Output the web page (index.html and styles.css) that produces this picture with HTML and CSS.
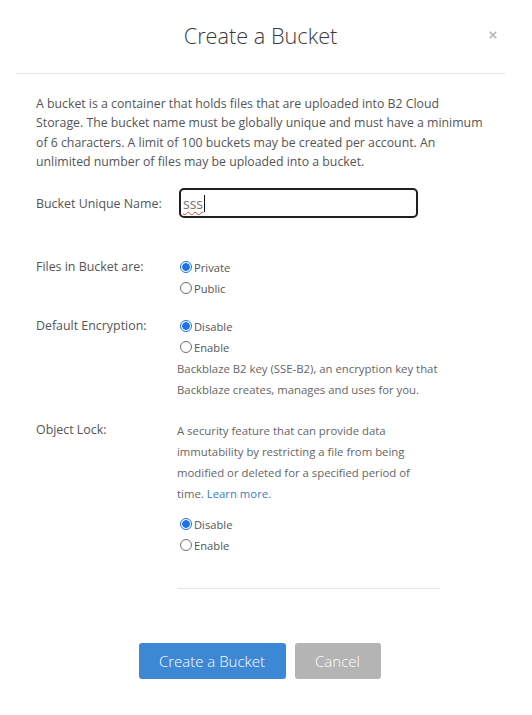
FILE: index.html
```html
<!DOCTYPE html>
<html lang="en">
<head>
<meta charset="utf-8">
<title>Create a Bucket</title>
<link rel="stylesheet" href="styles.css">
</head>
<body>
<div class="modal">
  <header class="modal-header">
    <h1 class="modal-title">Create a Bucket</h1>
    <button class="close" aria-label="Close">
      <svg width="8" height="8" viewBox="0 0 8 8"><path d="M0.8 0.8 L7.2 7.2 M7.2 0.8 L0.8 7.2" stroke="#b8b8b8" stroke-width="1.7" fill="none"/></svg>
    </button>
  </header>
  <div class="modal-body">
    <p class="intro">A bucket is a container that holds files that are uploaded into B2 Cloud Storage. The bucket name must be globally unique and must have a minimum of 6 characters. A limit of 100 buckets may be created per account. An unlimited number of files may be uploaded into a bucket.</p>

    <div class="row row-name">
      <div class="label">Bucket Unique Name:</div>
      <div class="fake-input"><span class="typed">sss</span><span class="caret"></span></div>
    </div>

    <div class="row row-files">
      <div class="label">Files in Bucket are:</div>
      <div class="control">
        <div class="radio"><span class="dot checked"></span>Private</div>
        <div class="radio"><span class="dot"></span>Public</div>
      </div>
    </div>

    <div class="row row-enc">
      <div class="label">Default Encryption:</div>
      <div class="control">
        <div class="radio"><span class="dot checked"></span>Disable</div>
        <div class="radio"><span class="dot"></span>Enable</div>
        <p class="desc desc-enc">Backblaze B2 key (SSE-B2), an encryption key that Backblaze creates, manages and uses for you.</p>
      </div>
    </div>

    <div class="row row-lock">
      <div class="label">Object Lock:</div>
      <div class="control">
        <p class="desc desc-lock">A security feature that can provide data immutability by restricting a file from being modified or deleted for a specified period of time. <a href="#" class="link">Learn more.</a></p>
        <div class="radios-lock">
          <div class="radio"><span class="dot checked"></span>Disable</div>
          <div class="radio"><span class="dot"></span>Enable</div>
        </div>
      </div>
    </div>

    <hr class="sep">
  </div>
  <footer class="actions">
    <button class="btn btn-primary">Create a Bucket</button>
    <button class="btn btn-cancel">Cancel</button>
  </footer>
</div>
</body>
</html>
```
FILE: styles.css
```css
html, body {
  margin: 0;
  padding: 0;
  background: #fff;
}
body {
  font-family: "Open Sans", "DejaVu Sans", sans-serif;
  color: #555;
}
.modal {
  width: 489px;
  margin-left: 16px;
}
.modal-header {
  position: relative;
  padding: 21px 0 22px;
  border-bottom: 1px solid #e5e5e5;
  text-align: center;
}
.modal-title {
  margin: 0;
  font-size: 21.7px;
  line-height: 30px;
  font-weight: 300;
  color: #3a3a3a;
}
.close {
  position: absolute;
  right: 8px;
  top: 31px;
  border: 0;
  padding: 0;
  background: none;
  width: 8px;
  height: 8px;
  display: flex;
}
.modal-body {
  padding: 0 20px;
}
.intro {
  margin: 20px 0 0;
  width: 450px;
  font-size: 12.3px;
  line-height: 19.3px;
  color: #555;
}
.row {
  display: grid;
  grid-template-columns: 143px 1fr;
  align-items: start;
}
.label {
  font-size: 12.4px;
  line-height: 19px;
  color: #555;
}
.row-name {
  margin-top: 17px;
  align-items: center;
}
.fake-input {
  box-sizing: border-box;
  width: 239px;
  height: 30px;
  border: 2px solid #1f1f1f;
  border-radius: 5px;
  display: flex;
  align-items: center;
  padding-left: 2px;
  font-size: 14px;
  color: #777;
}
.typed {
  text-decoration: underline wavy #e0463a 1px;
  text-underline-offset: 2px;
}
.caret {
  width: 1px;
  height: 17px;
  background: #111;
  margin-left: 1px;
}
.row-files {
  margin-top: 39px;
}
.row-enc {
  margin-top: 17px;
}
.row-lock {
  margin-top: 20px;
}
.control {
  display: flex;
  flex-direction: column;
}
.radio {
  display: flex;
  align-items: center;
  font-size: 11.2px;
  line-height: 21px;
  color: #555;
}
.dot {
  box-sizing: border-box;
  width: 12px;
  height: 12px;
  border-radius: 50%;
  border: 1px solid #6f6f6f;
  margin: 0 2px 1px 1px;
  background: #fff;
}
.dot.checked {
  border-color: #1a73e8;
  background: radial-gradient(circle, #1a73e8 0 3.5px, #fff 4.1px);
}
.desc {
  margin: 0;
  margin-left: -2px;
  font-size: 11.35px;
  line-height: 21px;
  color: #666;
}
.desc-enc {
  width: 272px;
}
.desc-lock {
  width: 248px;
}
.radios-lock {
  margin-top: 10px;
}
.link {
  color: #3a7ebf;
  text-decoration: none;
}
.sep {
  margin: 32px 0 0 142px;
  width: 262px;
  border: 0;
  border-top: 1px solid #e6e6e6;
  height: 0;
}
.actions {
  display: flex;
  justify-content: center;
  gap: 9px;
  margin-top: 54px;
  padding-right: 2px;
}
.btn {
  height: 36px;
  border: 0;
  border-radius: 3px;
  font-family: "Open Sans", "DejaVu Sans", sans-serif;
  font-size: 15px;
  font-weight: 300;
  color: #fff;
  padding: 0;
}
.btn-primary {
  width: 147px;
  background: #3d88d4;
}
.btn-cancel {
  width: 86px;
  background: #b4b4b4;
}
```
